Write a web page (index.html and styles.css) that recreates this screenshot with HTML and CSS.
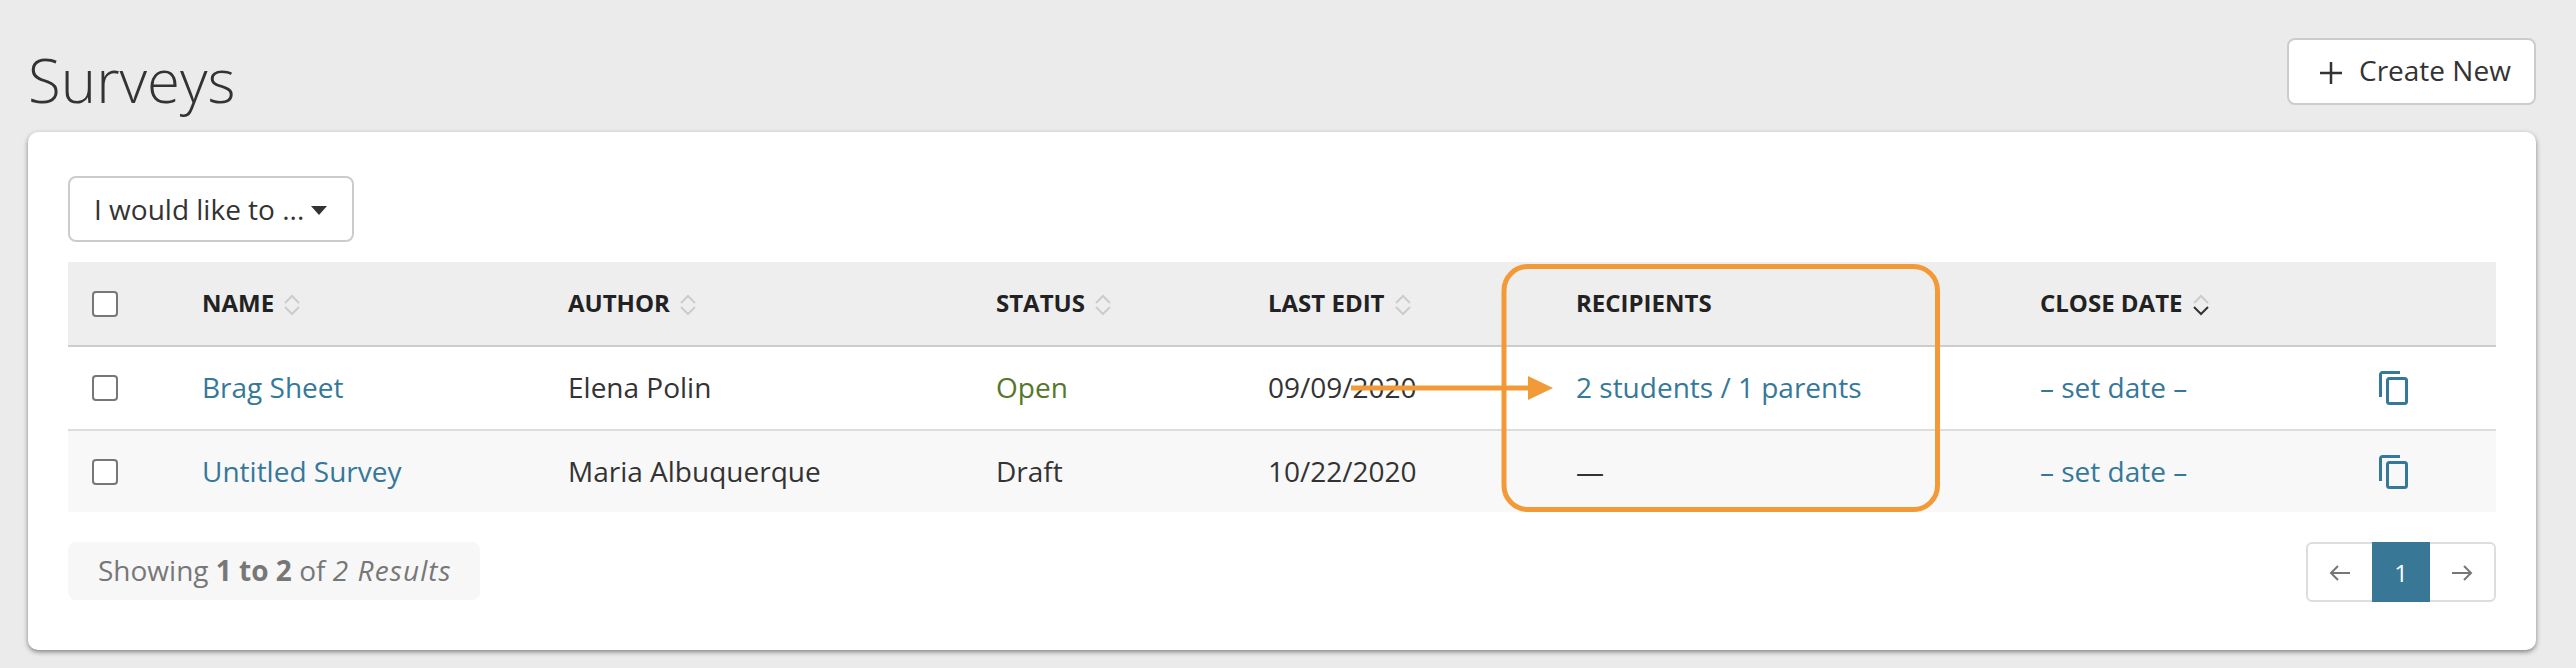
FILE: index.html
```html
<!DOCTYPE html>
<html lang="en">
<head>
<meta charset="utf-8">
<title>Surveys</title>
<link rel="stylesheet" href="styles.css">
</head>
<body>
<main class="page">
  <header class="page-head">
    <h1 class="title">Surveys</h1>
    <button class="btn btn-create" type="button">
      <svg class="plus" viewBox="0 0 22 22" aria-hidden="true"><path d="M11 0v22M0 11h22"/></svg>
      <span>Create New</span>
    </button>
  </header>
  <section class="card">
    <button class="btn btn-action" type="button">I would like to ... <span class="caret"></span></button>
    <div class="table-wrap">
      <table class="table">
        <colgroup>
          <col class="c-check"><col class="c-name"><col class="c-author"><col class="c-status"><col class="c-edit"><col class="c-recip"><col class="c-close"><col class="c-copy">
        </colgroup>
        <thead>
          <tr>
            <th class="check-cell"><span class="checkbox"></span></th>
            <th>NAME <svg class="sort" viewBox="0 0 16 22"><path class="up" d="M1 9l7-7 7 7"/><path class="down" d="M1 13l7 7 7-7"/></svg></th>
            <th>AUTHOR <svg class="sort" viewBox="0 0 16 22"><path class="up" d="M1 9l7-7 7 7"/><path class="down" d="M1 13l7 7 7-7"/></svg></th>
            <th>STATUS <svg class="sort" viewBox="0 0 16 22"><path class="up" d="M1 9l7-7 7 7"/><path class="down" d="M1 13l7 7 7-7"/></svg></th>
            <th>LAST EDIT <svg class="sort" viewBox="0 0 16 22"><path class="up" d="M1 9l7-7 7 7"/><path class="down" d="M1 13l7 7 7-7"/></svg></th>
            <th>RECIPIENTS</th>
            <th>CLOSE DATE <svg class="sort" viewBox="0 0 16 22"><path class="up" d="M1 9l7-7 7 7"/><path class="down active" d="M1 13l7 7 7-7"/></svg></th>
            <th></th>
          </tr>
        </thead>
        <tbody>
          <tr>
            <td class="check-cell"><span class="checkbox"></span></td>
            <td><a class="link" href="#">Brag Sheet</a></td>
            <td>Elena Polin</td>
            <td class="open">Open</td>
            <td>09/09/2020</td>
            <td><a class="link" href="#">2 students / 1 parents</a></td>
            <td><a class="link" href="#">– set date –</a></td>
            <td class="copy-cell"><svg class="copy" viewBox="0 0 29 34"><path d="M21 1.500H3.500a2 2 0 0 0-2 2V26"/><rect x="8.500" y="7.500" width="19" height="25" rx="2"/></svg></td>
          </tr>
          <tr class="alt">
            <td class="check-cell"><span class="checkbox"></span></td>
            <td><a class="link" href="#">Untitled Survey</a></td>
            <td>Maria Albuquerque</td>
            <td>Draft</td>
            <td>10/22/2020</td>
            <td>—</td>
            <td><a class="link" href="#">– set date –</a></td>
            <td class="copy-cell"><svg class="copy" viewBox="0 0 29 34"><path d="M21 1.500H3.500a2 2 0 0 0-2 2V26"/><rect x="8.500" y="7.500" width="19" height="25" rx="2"/></svg></td>
          </tr>
        </tbody>
      </table>
      <svg class="callout" viewBox="0 0 640 260" aria-hidden="true">
        <rect class="callout-box" x="220" y="4.500" width="433.500" height="243" rx="24"/>
        <path class="callout-line" d="M67 126H246"/>
        <path class="callout-head" d="M244 114l25 12-25 12z"/>
      </svg>
    </div>
    <footer class="table-foot">
      <div class="results">Showing <b>1 to 2</b> of <i>2 Results</i></div>
      <nav class="pager">
        <a class="page-btn" href="#"><svg class="arrow" viewBox="0 0 22 18"><path d="M21 9H2M9 2L2 9l7 7"/></svg></a>
        <a class="page-btn current" href="#">1</a>
        <a class="page-btn" href="#"><svg class="arrow" viewBox="0 0 22 18"><path d="M1 9h19M13 2l7 7-7 7"/></svg></a>
      </nav>
    </footer>
  </section>
</main>
</body>
</html>
```
FILE: styles.css
```css
* { box-sizing: border-box; }
html, body { margin: 0; height: 100%; }
body {
  background: #ebebeb;
  color: #333;
  font-family: "Open Sans", "Liberation Sans", sans-serif;
  font-size: 28px;
}
.page { padding: 38px 40px 0 28px; }
.page-head {
  display: flex;
  justify-content: space-between;
  align-items: flex-start;
  height: 94px;
}
.title {
  margin: 3px 0 0;
  font-size: 60px;
  line-height: 78px;
  font-weight: 300;
  color: #333;
}
.btn {
  font: inherit;
  color: #333;
  background: #fff;
  border: 2px solid #ccc;
  border-radius: 8px;
  display: inline-flex;
  align-items: center;
}
.btn-create {
  width: 249px;
  height: 67px;
  padding: 0 0 3px 31px;
  gap: 17px;
}
.plus { width: 22px; height: 22px; fill: none; stroke: #333; stroke-width: 2.500; margin-top: 5px; }
.card {
  background: #fff;
  border-radius: 10px;
  box-shadow: 0 2px 5px rgba(0,0,0,.45);
  height: 518px;
  padding: 44px 40px 0;
}
.btn-action { width: 286px; height: 66px; padding: 0 0 0 24px; white-space: pre; }
.caret {
  width: 0; height: 0;
  border-left: 8px solid transparent;
  border-right: 8px solid transparent;
  border-top: 9px solid #333;
  margin-left: -1px;
  margin-top: 3px;
}
.table-wrap { position: relative; margin-top: 20px; }
.table { width: 100%; border-collapse: collapse; table-layout: fixed; }
.c-check { width: 134px; }
.c-name { width: 366px; }
.c-author { width: 428px; }
.c-status { width: 272px; }
.c-edit { width: 308px; }
.c-recip { width: 464px; }
.c-close { width: 338px; }
.c-copy { width: 118px; }
th, td { padding: 0 0 3px; text-align: left; vertical-align: middle; }
thead tr { background: #eee; height: 84px; border-bottom: 2px solid #ccc; }
tbody tr { height: 84px; border-bottom: 2px solid #ddd; }
tbody tr.alt { height: 82px; background: #f8f8f8; border-bottom: 0; }
tbody tr.alt td { padding-bottom: 2px; }
th { font-size: 24px; font-weight: 700; color: #222; white-space: nowrap; }
.table .check-cell { padding: 0 0 0 24px; }
.table .copy-cell { padding: 0 0 0 1px; }
.checkbox {
  display: block;
  width: 26px;
  height: 26px;
  background: #fff;
  border: 2px solid #777;
  border-radius: 4px;
}
.sort { width: 16px; height: 22px; margin-left: 4px; vertical-align: -4px; fill: none; stroke-width: 2; }
.sort .up, .sort .down { stroke: #ccc; }
.sort .down.active { stroke: #333; }
.link { color: #35789a; text-decoration: none; }
.open { color: #55782a; }
.copy { display: block; width: 29px; height: 34px; fill: none; stroke: #35789a; stroke-width: 3; }
.callout { position: absolute; left: 1216px; top: 0; width: 640px; height: 260px; overflow: visible; }
.callout-box { fill: none; stroke: #f39a38; stroke-width: 5; }
.callout-line { fill: none; stroke: #f39a38; stroke-width: 5; }
.callout-head { fill: #f39a38; }
.table-foot { display: flex; justify-content: space-between; align-items: flex-start; margin-top: 30px; }
.results {
  width: 412px;
  height: 58px;
  line-height: 56px;
  padding-left: 30px;
  background: #f7f7f7;
  border-radius: 8px;
  color: #777;
  white-space: nowrap;
}
.results i { letter-spacing: 1.100px; }
.pager {
  display: flex;
  width: 190px;
  height: 60px;
  border: 2px solid #ddd;
  border-radius: 6px;
  background: #fff;
}
.page-btn { flex: 1; display: flex; align-items: center; justify-content: center; text-decoration: none; }
.page-btn.current { flex: 0 0 58px; margin: -2px 0; background: #387896; color: #fff; font-size: 24px; }
.arrow { width: 22px; height: 18px; fill: none; stroke: #777; stroke-width: 2; margin-top: 2px; }
```
